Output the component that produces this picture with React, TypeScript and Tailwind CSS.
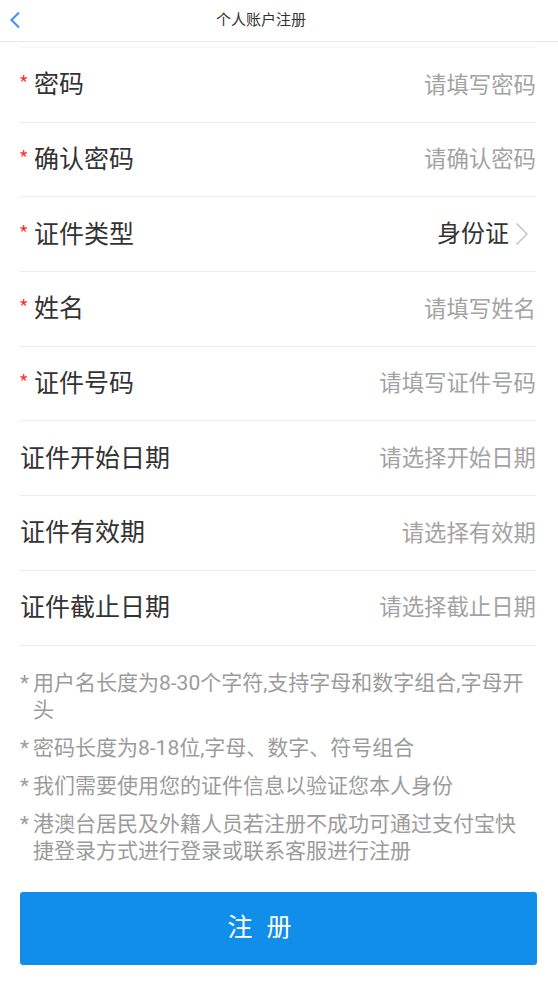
import React from "react";

const rows: { label: string; required: boolean; value: string; select?: boolean }[] = [
  { label: "密码", required: true, value: "请填写密码" },
  { label: "确认密码", required: true, value: "请确认密码" },
  { label: "证件类型", required: true, value: "身份证", select: true },
  { label: "姓名", required: true, value: "请填写姓名" },
  { label: "证件号码", required: true, value: "请填写证件号码" },
  { label: "证件开始日期", required: false, value: "请选择开始日期" },
  { label: "证件有效期", required: false, value: "请选择有效期" },
  { label: "证件截止日期", required: false, value: "请选择截止日期" },
];

const notes = [
  "用户名长度为8-30个字符,支持字母和数字组合,字母开头",
  "密码长度为8-18位,字母、数字、符号组合",
  "我们需要使用您的证件信息以验证您本人身份",
  "港澳台居民及外籍人员若注册不成功可通过支付宝快捷登录方式进行登录或联系客服进行注册",
];

export default function App() {
  return (
    <div
      className="w-[558px] h-[997px] bg-white overflow-hidden"
      style={{ fontFamily: 'Roboto, "Noto Sans CJK SC", sans-serif' }}
    >
      <div className="h-[42px] flex items-center border-b border-[#e8e8e8] relative">
        <svg className="absolute left-[9px] top-[11px]" width="12" height="18" viewBox="0 0 12 18">
          <path d="M10 1.5 L2.5 9 L10 16.5" fill="none" stroke="#3d8ff2" strokeWidth="2" />
        </svg>
        <div className="flex-1 text-center text-[15px] text-[#333] pr-[36px]">个人账户注册</div>
      </div>
      <div className="ml-[20px] mr-[22px] mt-[5px] border-t border-[#f5f5f5]">
        {rows.map((r) => (
          <div
            key={r.label}
            className="h-[74.7px] flex items-center justify-between border-b border-[#ececec]"
          >
            <div className="flex items-center">
              {r.required && (
                <span className="text-[#ff1a1a] text-[17px] leading-none w-[14px] -mt-[6px]">*</span>
              )}
              <span className="text-[25px] text-[#333] leading-none">{r.value === "" ? "" : r.label}</span>
            </div>
            {r.select ? (
              <div className="flex items-center">
                <span className="text-[24px] text-[#333] leading-none">{r.value}</span>
                <svg className="ml-[6px] mr-[7px]" width="14" height="24" viewBox="0 0 14 24">
                  <path d="M1.5 1.5 L12 12 L1.5 22.5" fill="none" stroke="#c4c4c4" strokeWidth="1.5" />
                </svg>
              </div>
            ) : (
              <span className="text-[22.4px] text-[#a3a3a3] leading-none">{r.value}</span>
            )}
          </div>
        ))}
      </div>
      <div className="ml-[20px] mr-[22px] mt-[24px] flex flex-col gap-[11px]">
        {notes.map((n) => (
          <div key={n} className="flex text-[21px] leading-[27px] text-[#9b9b9b]">
            <span className="w-[13px] shrink-0">*</span>
            <span>{n}</span>
          </div>
        ))}
      </div>
      <div className="ml-[20px] mr-[21px] mt-[27px]">
        <button className="w-full h-[73px] rounded-[3px] bg-[#108ee9] text-white text-[25px] tracking-[4px] flex items-center justify-center pr-[34px]">
          注 册
        </button>
      </div>
    </div>
  );
}
